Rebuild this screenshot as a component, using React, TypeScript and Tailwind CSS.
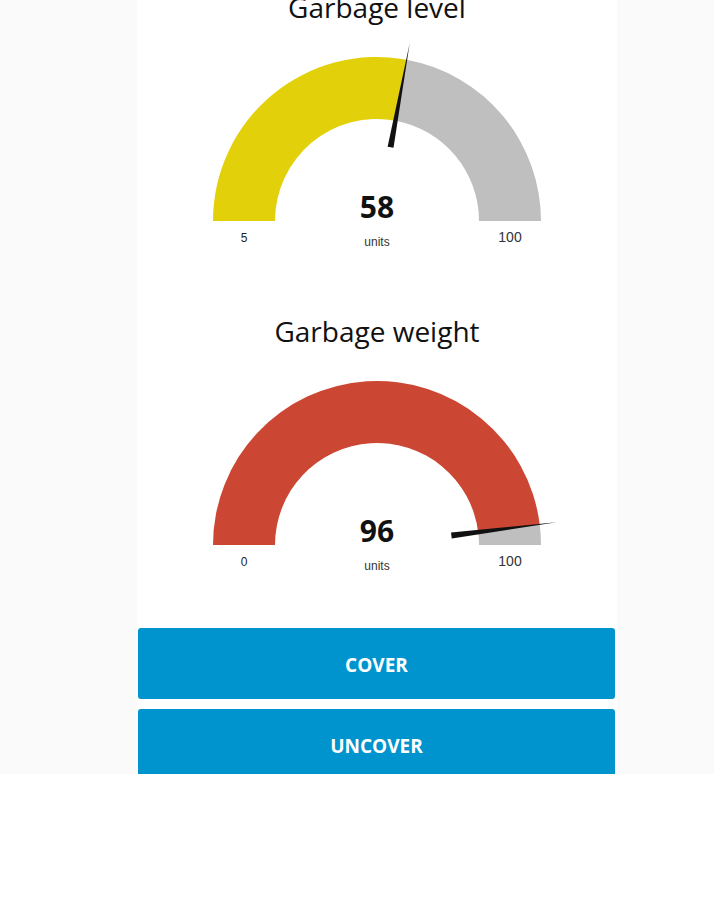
import React from "react";

type GaugeProps = {
  title: string;
  value: number;
  min: number;
  max: number;
  color: string;
  units: string;
};

const CX = 240;
const CY = 190;
const R_OUT = 164;
const R_IN = 102;

function pt(r: number, deg: number) {
  const a = (deg * Math.PI) / 180;
  return [CX - r * Math.cos(a), CY - r * Math.sin(a)];
}

function band(from: number, to: number) {
  const [x1, y1] = pt(R_OUT, from);
  const [x2, y2] = pt(R_OUT, to);
  const [x3, y3] = pt(R_IN, to);
  const [x4, y4] = pt(R_IN, from);
  return `M${x1} ${y1} A${R_OUT} ${R_OUT} 0 0 1 ${x2} ${y2} L${x3} ${y3} A${R_IN} ${R_IN} 0 0 0 ${x4} ${y4} Z`;
}

function needle(deg: number) {
  const a = (deg * Math.PI) / 180;
  const [bx, by] = pt(75, deg);
  const [tx, ty] = pt(181, deg);
  // perpendicular for the base width
  const px = Math.sin(a) * 3;
  const py = -Math.cos(a) * 3;
  return `${bx + px},${by + py} ${bx - px},${by - py} ${tx},${ty}`;
}

function Gauge({ title, value, min, max, color, units }: GaugeProps) {
  const deg = ((value - min) / (max - min)) * 180;
  return (
    <div className="flex flex-col items-center">
      <div className="flex h-[48px] items-center justify-center text-[28px] text-[#111]">{title}</div>
      <svg width="480" height="220" viewBox="0 0 480 220">
        <path d={band(0, deg)} fill={color} />
        <path d={band(deg, 180)} fill="#bfbfbf" />
        <polygon points={needle(deg)} fill="#111" />
        <text
          x={CX}
          y={187}
          textAnchor="middle"
          fontFamily="'Open Sans', sans-serif"
          fontWeight={700}
          fontSize={30}
          fill="#111"
        >
          {value}
        </text>
        <text x={CX} y={215} textAnchor="middle" fontFamily="'Liberation Sans', Arial, sans-serif" fontSize={12} fill="#333">
          {units}
        </text>
        <text x={107} y={211} textAnchor="middle" fontFamily="'Liberation Sans', Arial, sans-serif" fontSize={12} fill="#222">
          {min}
        </text>
        <text x={373} y={211} textAnchor="middle" fontFamily="'Liberation Sans', Arial, sans-serif" fontSize={14} fill="#333">
          {max}
        </text>
      </svg>
    </div>
  );
}

export default function App() {
  return (
    <div className="h-[774px] overflow-hidden bg-[#fafafa] font-['Open_Sans',sans-serif]">
      <div className="ml-[137px] w-[480px] bg-white">
        <div className="-mt-[17px]">
          <Gauge title="Garbage level" value={58} min={5} max={100} color="#e2d10a" units="units" />
          <div className="h-[56px]" />
          <Gauge title="Garbage weight" value={96} min={0} max={100} color="#cb4733" units="units" />
        </div>
        <div className="mt-[53px] flex flex-col gap-[10px] pb-4 pl-px pr-[2px]">
          <button className="h-[71px] rounded-[3px] bg-[#0094ce] pt-[4px] text-[19px] font-bold text-white">COVER</button>
          <button className="h-[71px] rounded-[3px] bg-[#0094ce] pt-[4px] text-[19px] font-bold text-white">UNCOVER</button>
        </div>
      </div>
    </div>
  );
}
